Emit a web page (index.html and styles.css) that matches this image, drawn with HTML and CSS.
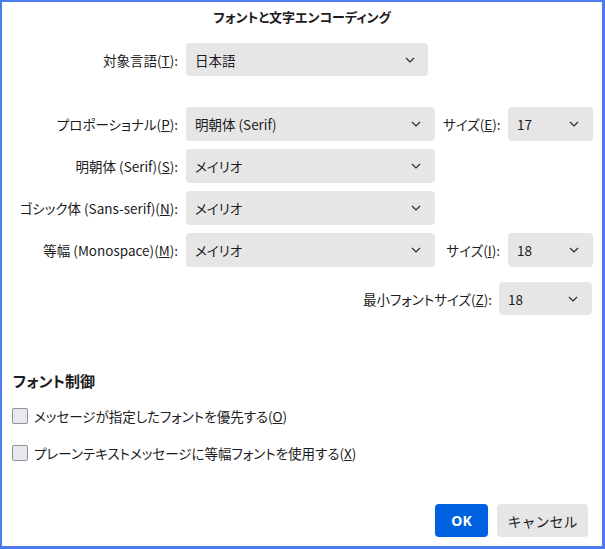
FILE: index.html
```html
<!DOCTYPE html>
<html lang="ja">
<head>
<meta charset="utf-8">
<link rel="stylesheet" href="styles.css">
</head>
<body>
<div class="window">
  <div class="title">フォントと文字エンコーディング</div>

  <div class="grid lang">
    <label class="lbl">対象言語(<u>T</u>):</label>
    <div class="select"><span>日本語</span><svg class="chev" viewBox="0 0 10 6"><polyline points="1,1 5,5 9,1"/></svg></div>
  </div>

  <div class="grid fonts">
    <label class="lbl">プロポーショナル(<u>P</u>):</label>
    <div class="select"><span>明朝体 (Serif)</span><svg class="chev" viewBox="0 0 10 6"><polyline points="1,1 5,5 9,1"/></svg></div>
    <label class="lbl">サイズ(<u>E</u>):</label>
    <div class="select"><span>17</span><svg class="chev" viewBox="0 0 10 6"><polyline points="1,1 5,5 9,1"/></svg></div>

    <label class="lbl">明朝体 (Serif)(<u>S</u>):</label>
    <div class="select"><span>メイリオ</span><svg class="chev" viewBox="0 0 10 6"><polyline points="1,1 5,5 9,1"/></svg></div>
    <div></div><div></div>

    <label class="lbl">ゴシック体 (Sans-serif)(<u>N</u>):</label>
    <div class="select"><span>メイリオ</span><svg class="chev" viewBox="0 0 10 6"><polyline points="1,1 5,5 9,1"/></svg></div>
    <div></div><div></div>

    <label class="lbl">等幅 (Monospace)(<u>M</u>):</label>
    <div class="select"><span>メイリオ</span><svg class="chev" viewBox="0 0 10 6"><polyline points="1,1 5,5 9,1"/></svg></div>
    <label class="lbl">サイズ(<u>I</u>):</label>
    <div class="select"><span>18</span><svg class="chev" viewBox="0 0 10 6"><polyline points="1,1 5,5 9,1"/></svg></div>
  </div>

  <div class="minrow">
    <label class="lbl">最小フォントサイズ(<u>Z</u>):</label>
    <div class="select w-min"><span>18</span><svg class="chev" viewBox="0 0 10 6"><polyline points="1,1 5,5 9,1"/></svg></div>
  </div>

  <div class="heading">フォント制御</div>
  <label class="check first"><span class="box"></span><span>メッセージが指定したフォントを優先する(<u>O</u>)</span></label>
  <label class="check"><span class="box"></span><span>プレーンテキストメッセージに等幅フォントを使用する(<u>X</u>)</span></label>

  <div class="footer">
    <button class="btn primary">OK</button>
    <button class="btn">キャンセル</button>
  </div>
</div>
</body>
</html>
```

FILE: styles.css
```css
html, body {
  margin: 0;
  padding: 0;
  background: #ffffff;
}
body {
  font-family: "Noto Sans CJK JP", sans-serif;
  font-size: 13.5px;
  color: #1c1b22;
  font-feature-settings: "palt";
}
.window {
  width: 605px;
  height: 549px;
  box-sizing: border-box;
  border-style: solid;
  border-color: #4b7bec;
  border-width: 2px 3px 3px 2px;
  padding: 0 10px 9px 10px;
  display: flex;
  flex-direction: column;
}
.title {
  margin-top: 5px;
  height: 20px;
  line-height: 20px;
  text-align: center;
  font-size: 13px;
  font-weight: 700;
}
.grid {
  display: grid;
  align-items: center;
}
.lang {
  margin-top: 16px;
  grid-template-columns: 166px 242px;
  column-gap: 8px;
}
.fonts {
  margin-top: 31px;
  grid-template-columns: 166px 249px 57px 85px;
  column-gap: 8px;
  row-gap: 8px;
  grid-auto-rows: 34px;
}
.lbl {
  text-align: right;
  white-space: nowrap;
}
.select {
  height: 34px;
  box-sizing: border-box;
  background: #e6e6e6;
  border-radius: 4px;
  display: flex;
  align-items: center;
  justify-content: space-between;
  padding: 0 14px 0 9px;
}
.lang .select {
  height: 33px;
  padding-right: 13px;
}
.chev {
  width: 10px;
  height: 6px;
  fill: none;
  stroke: #2b2a33;
  stroke-width: 1.2;
}
.minrow {
  margin-top: 15px;
  display: flex;
  justify-content: flex-end;
  align-items: center;
  column-gap: 7px;
}
.w-min {
  width: 93px;
  height: 33px;
}
.heading {
  margin-top: 56px;
  height: 20px;
  line-height: 20px;
  font-size: 15px;
  font-weight: 700;
  padding-left: 1px;
}
.check {
  display: flex;
  align-items: center;
  height: 22px;
  column-gap: 6px;
  white-space: nowrap;
}
.check.first {
  margin-top: 14px;
}
.check + .check {
  margin-top: 15px;
}
.box {
  width: 16px;
  height: 16px;
  box-sizing: border-box;
  border: 1px solid #8f8f9d;
  border-radius: 2px;
  background: #e9e9ed;
}
.footer {
  margin-top: auto;
  display: flex;
  justify-content: flex-end;
  column-gap: 9px;
  padding-right: 4px;
}
.btn {
  height: 33px;
  border: none;
  border-radius: 4px;
  background: #e6e6e6;
  color: #1c1b22;
  font-family: inherit;
  font-size: 14px;
  font-weight: 400;
  padding: 0;
  width: 91px;
}
.btn.primary {
  width: 53px;
  background: #0061e0;
  color: #ffffff;
  font-weight: 700;
  font-family: "Noto Sans", sans-serif;
}
```
